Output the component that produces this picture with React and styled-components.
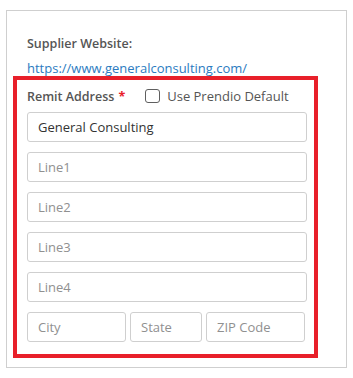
import styled, { createGlobalStyle } from "styled-components";

const Global = createGlobalStyle`
  body {
    margin: 0;
    background: #fff;
    font-family: "Open Sans", "Liberation Sans", sans-serif;
  }
`;

const Card = styled.div`
  margin: 10px 0 0 6px;
  width: 341px;
  height: 358px;
  border: 1px solid #cfcfcf;
  padding: 24px 0 0 6px;
  box-sizing: border-box;
`;

const Field = styled.div`
  padding-left: 14px;
`;

const Label = styled.div`
  font-size: 12.5px;
  font-weight: 600;
  color: #555;
  line-height: 17px;
`;

const Link = styled.a`
  display: block;
  margin-top: 8px;
  font-size: 13px;
  color: #2b7bbf;
  text-decoration: none;
  line-height: 16px;
`;

const Highlight = styled.div`
  width: 305px;
  border: 4px solid #e8202a;
  box-sizing: border-box;
  padding: 4px 10px 12px 10px;
`;

const HeadRow = styled.div`
  display: flex;
  align-items: center;
  height: 24px;
  margin-bottom: 4px;
`;

const Star = styled.span`
  color: #e8202a;
  font-weight: 700;
  margin-left: 4px;
`;

const Check = styled.label`
  display: flex;
  align-items: center;
  margin-left: 20px;
  font-size: 13px;
  color: #555;
`;

const Box = styled.span`
  width: 13px;
  height: 12px;
  border: 1px solid #5f5f5f;
  border-radius: 3px;
  margin-right: 7px;
`;

const Stack = styled.div`
  display: flex;
  flex-direction: column;
  gap: 10px;
`;

const Row = styled.div`
  display: flex;
  gap: 4px;
`;

const Input = styled.input`
  box-sizing: border-box;
  width: ${(p) => p.w || "280px"};
  height: 30px;
  border: 1px solid #cfcfcf;
  border-radius: 3px;
  padding: 0 10px;
  font-family: "Open Sans", "Liberation Sans", sans-serif;
  font-size: 13px;
  color: #333;
  outline: none;
  &::placeholder {
    color: #909090;
  }
`;

export default function App() {
  return (
    <>
      <Global />
      <Card>
        <Field>
          <Label>Supplier Website:</Label>
          <Link href="#">https://www.generalconsulting.com/</Link>
        </Field>
        <Highlight>
          <HeadRow>
            <Label>
              Remit Address<Star>*</Star>
            </Label>
            <Check>
              <Box />
              Use Prendio Default
            </Check>
          </HeadRow>
          <Stack>
            <Input defaultValue="General Consulting" />
            <Input placeholder="Line1" />
            <Input placeholder="Line2" />
            <Input placeholder="Line3" />
            <Input placeholder="Line4" />
            <Row>
              <Input w="99px" placeholder="City" />
              <Input w="72px" placeholder="State" />
              <Input w="99px" placeholder="ZIP Code" />
            </Row>
          </Stack>
        </Highlight>
      </Card>
    </>
  );
}
